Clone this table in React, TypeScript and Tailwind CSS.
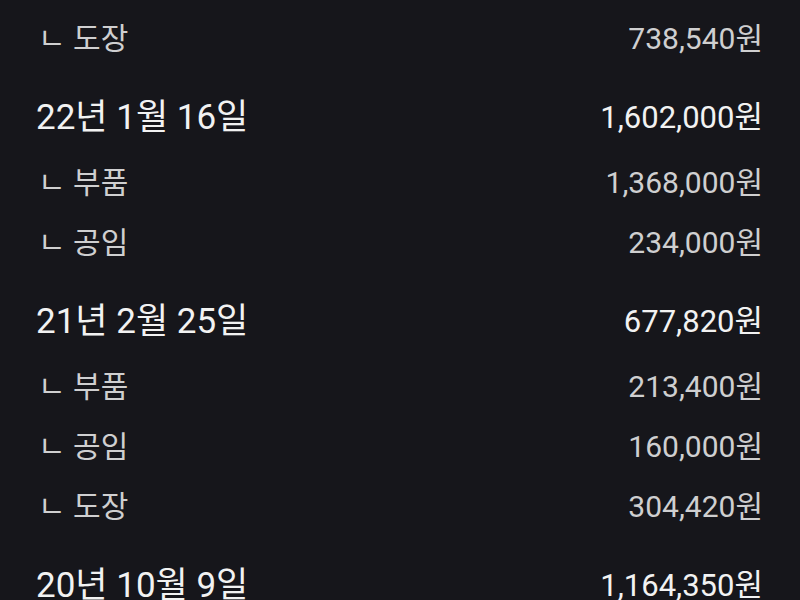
const rows: { kind: "date" | "item"; label: string; amount: string }[] = [
  { kind: "item", label: "ㄴ 도장", amount: "738,540원" },
  { kind: "date", label: "22년 1월 16일", amount: "1,602,000원" },
  { kind: "item", label: "ㄴ 부품", amount: "1,368,000원" },
  { kind: "item", label: "ㄴ 공임", amount: "234,000원" },
  { kind: "date", label: "21년 2월 25일", amount: "677,820원" },
  { kind: "item", label: "ㄴ 부품", amount: "213,400원" },
  { kind: "item", label: "ㄴ 공임", amount: "160,000원" },
  { kind: "item", label: "ㄴ 도장", amount: "304,420원" },
  { kind: "date", label: "20년 10월 9일", amount: "1,164,350원" },
];

export default function App() {
  return (
    <div
      className="w-[800px] h-[600px] overflow-hidden bg-[#16161b] pt-2 pl-[36px] pr-[37px]"
      style={{ fontFamily: "Roboto, 'Noto Sans CJK KR', sans-serif" }}
    >
      {rows.map((r, i) =>
        r.kind === "date" ? (
          <div
            key={i}
            className="mt-4 h-[68px] flex items-center justify-between text-[#f2f2f2]"
          >
            <span className="text-[35px]">{r.label}</span>
            <span className="text-[31px]">{r.amount}</span>
          </div>
        ) : (
          <div
            key={i}
            className="h-[60px] flex items-center justify-between text-[30px] text-[#cfcfd0]"
          >
            <span className="pl-[2px]">{r.label}</span>
            <span>{r.amount}</span>
          </div>
        )
      )}
    </div>
  );
}
